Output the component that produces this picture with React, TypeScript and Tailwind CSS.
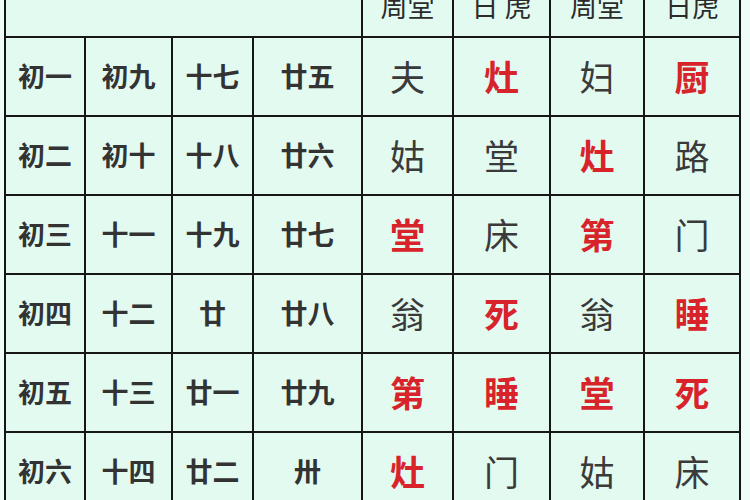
type Cell = { t: string; red?: boolean };

const rows: { days: string[]; marks: Cell[] }[] = [
  { days: ["初一", "初九", "十七", "廿五"], marks: [{ t: "夫" }, { t: "灶", red: true }, { t: "妇" }, { t: "厨", red: true }] },
  { days: ["初二", "初十", "十八", "廿六"], marks: [{ t: "姑" }, { t: "堂" }, { t: "灶", red: true }, { t: "路" }] },
  { days: ["初三", "十一", "十九", "廿七"], marks: [{ t: "堂", red: true }, { t: "床" }, { t: "第", red: true }, { t: "门" }] },
  { days: ["初四", "十二", "廿", "廿八"], marks: [{ t: "翁" }, { t: "死", red: true }, { t: "翁" }, { t: "睡", red: true }] },
  { days: ["初五", "十三", "廿一", "廿九"], marks: [{ t: "第", red: true }, { t: "睡", red: true }, { t: "堂", red: true }, { t: "死", red: true }] },
  { days: ["初六", "十四", "廿二", "卅"], marks: [{ t: "灶", red: true }, { t: "门" }, { t: "姑" }, { t: "床" }] },
];

const headers = ["周堂", "日 虎", "周堂", "日虎"];

export default function App() {
  return (
    <div
      className="h-[500px] w-[750px] overflow-hidden bg-[#eefdf7]"
      style={{ fontFamily: '"Noto Sans CJK SC", "Noto Sans", sans-serif' }}
    >
      <div className="ml-[4px] -mt-[26px] grid w-[737px] grid-cols-[78px_85px_79px_107px_89px_95px_92px_94px] grid-rows-[60px_repeat(6,77px)] gap-[2px] bg-[#161616] p-[2px]">
        <div className="col-span-4 bg-[#e3faf1]" />
        {headers.map((h, i) => (
          <div
            key={i}
            className="flex items-end justify-center whitespace-pre bg-[#e3faf1] pb-[17px] text-[27px] leading-[27px] text-[#2b2b2b]"
          >
            {h}
          </div>
        ))}
        {rows.map((row, r) => (
          <div key={r} className="contents">
            {row.days.map((d, i) => (
              <div
                key={`d${i}`}
                className="flex items-center justify-center bg-[#e3faf1] text-[27px] font-bold text-[#333333]"
              >
                {d}
              </div>
            ))}
            {row.marks.map((m, i) => (
              <div
                key={`m${i}`}
                className={
                  m.red
                    ? "flex items-center justify-center bg-[#e3faf1] text-[35px] font-bold text-[#d8232a]"
                    : "flex items-center justify-center bg-[#e3faf1] text-[35px] text-[#3a3a3a]"
                }
              >
                {m.t}
              </div>
            ))}
          </div>
        ))}
      </div>
    </div>
  );
}
